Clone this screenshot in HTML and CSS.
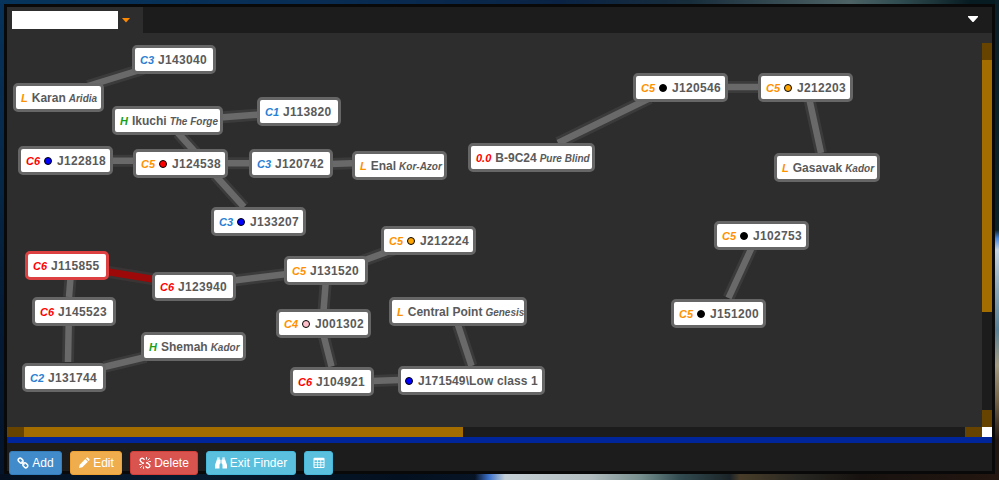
FILE: index.html
```
<!DOCTYPE html>
<html lang="en">
<head>
<meta charset="utf-8">
<title>Map</title>
<link rel="stylesheet" href="styles.css">
</head>
<body>
<main class="window">
  <header class="header">
    <div class="tab"><span class="tab-name"></span><svg class="caret" width="8" height="5" viewBox="0 0 8 5"><path d="M0 0h8L4 4.6z" fill="#ff8a00"/></svg></div>
    <svg class="menu" width="10" height="6" viewBox="0 0 10 6"><path d="M0 0h10v1L5.5 6h-1L0 1z" fill="#fff"/></svg>
  </header>
  <div class="view">
    <div class="canvas">
      <svg class="edges" width="975" height="394" viewBox="7 33 975 394">
        <defs>
          <path id="e" d="M88 86L143 69M220 117.5L260 114.5M178 133L196 153M110 160.7H136M226 163.300H252M330 164L352 163.300M215 175L244 207M234 280.500L287 274M357 263L395 249M325.600 284L323.500 311M324 337L331.500 366.500M371 381L400 380M458 325L471.500 366M70.500 278L69 297M68.700 324L68 362M104 367L146 357M558 143L650 98M725 87H760M809.500 100L821 153M751.500 248L728.500 298"/>
        </defs>
        <use href="#e" stroke="#3b3b3b" stroke-width="12"/>
        <path d="M106 271.500L155 279.500" stroke="#3b3434" stroke-width="12"/>
        <use href="#e" stroke="#696969" stroke-width="6.500"/>
        <path d="M106 271.500L155 279.500" stroke="#9d0808" stroke-width="7"/>
      </svg>
      <div id="nodes"></div>
    </div>
    <div class="vbar"><i class="step"></i><i class="thumb"></i><i class="track"></i><i class="step"></i></div>
  </div>
  <div class="hbar"><i class="step"></i><i class="thumb"></i><i class="track"></i><i class="step"></i><i class="corner"></i></div>
  <div class="divider"></div>
  <footer class="footer">
    <button class="btn add"><svg width="12" height="12" viewBox="0 0 12 12" fill="none" stroke="#fff" stroke-width="1.500"><rect x="-2.600" y="-1.900" width="5.200" height="3.800" rx="1.700" transform="translate(3.600 3.600) rotate(45)"/><rect x="-2.600" y="-1.900" width="5.200" height="3.800" rx="1.700" transform="translate(8.300 8.300) rotate(45)"/><path d="M4.500 4.500l3 3"/></svg>Add</button>
    <button class="btn edit"><svg width="12" height="12" viewBox="0 0 12 12" fill="#fff"><path d="M1 11l.7-3.300L7.300 2.100l2.600 2.600-5.600 5.600zM8 1.400l.8-.8q.5-.4 1 0l1.600 1.600q.4.500 0 1l-.8.800z"/></svg>Edit</button>
    <button class="btn delete"><svg width="12" height="12" viewBox="0 0 12 12" fill="none" stroke="#fff" stroke-width="1.300"><path d="M5.500 2.800L4.300 1.600Q3 .7 1.800 1.800T1.600 4.300L3.600 6.200 5 6M6.500 9.200l1.200 1.200q1.300.9 2.500-.2t.2-2.500L8.400 5.800 7 6"/><path stroke-width=".9" d="M7.500 0v2.500M8.700 3.300L10.800 1.200M9.500 4.500H12M0 7.500h2.500M1.200 10.800l2.100-2.100M4.500 9.500V12"/></svg>Delete</button>
    <button class="btn info finder"><svg width="12" height="12" viewBox="0 0 12 12" fill="#fff"><path d="M2.200.4h2.500v1.300H2.200zM7.300.4h2.500v1.300H7.300zM2 2.200h3v4.500l-.5 1V11.500H0V8zM10 2.200H7v4.500l.5 1v3.800H12V8zM5.400 2.700h1.200v3.800H5.400z"/></svg>Exit Finder</button>
    <button class="btn info grid"><svg width="12" height="12" viewBox="0 0 12 12"><rect x=".5" y=".8" width="11" height="10.200" rx="1" fill="#fff"/><path fill="#5bc0de" d="M1.500 3.200h2.500v1.700H1.500zM4.800 3.200h2.600v1.700H4.800zM8.200 3.200h2.400v1.700H8.200zM1.500 5.700h2.500v1.700H1.500zM4.800 5.700h2.600v1.700H4.800zM8.200 5.700h2.400v1.700H8.200zM1.500 8.200h2.500v1.800H1.500zM4.800 8.200h2.600v1.800H4.800zM8.200 8.200h2.400v1.800H8.200z"/></svg></button>
  </footer>
</main>
<script src="map.js"></script>
</body>
</html>
```
FILE: map.js
```
// x, y, width, class code, effect colour, name, region
const systems = [
  [132, 45, 84, "C3", "", "J143040", ""],
  [13, 83, 91, "L", "", "Karan", "Aridia"],
  [112, 106, 110.5, "H", "", "Ikuchi", "The Forge"],
  [257, 97, 84, "C1", "", "J113820", ""],
  [249, 149, 84, "C3", "", "J120742", ""],
  [352, 151, 94.5, "L", "", "Enal", "Kor-Azor"],
  [468, 143, 126.5, "0.0", "", "B-9C24", "Pure Blind"],
  [18, 146, 95, "C6", "blue", "J122818", ""],
  [133, 149, 95, "C5", "red", "J124538", ""],
  [211, 207, 95, "C3", "blue", "J133207", ""],
  [25, 251, 84, "C6", "", "J115855", "", "selected"],
  [152, 272, 84, "C6", "", "J123940", ""],
  [32, 297, 84, "C6", "", "J145523", ""],
  [141, 332, 104.5, "H", "", "Shemah", "Kador"],
  [22, 363, 84, "C2", "", "J131744", ""],
  [381, 226, 95, "C5", "orange", "J212224", ""],
  [284, 256, 84, "C5", "", "J131520", ""],
  [276, 309, 95, "C4", "pink", "J001302", ""],
  [389, 297, 137.5, "L", "", "Central Point", "Genesis"],
  [290, 367, 84, "C6", "", "J104921", ""],
  [398, 366, 146.5, "", "blue", "J171549\\Low class 1", "", "plain"],
  [633, 73, 95, "C5", "black", "J120546", ""],
  [758, 73, 95, "C5", "orange", "J212203", ""],
  [774, 153, 105.5, "L", "", "Gasavak", "Kador"],
  [714, 221, 95, "C5", "black", "J102753", ""],
  [671, 299, 95, "C5", "black", "J151200", ""]
];
const tone = { C1: "easy", C2: "easy", C3: "easy", C4: "mid", C5: "mid", L: "mid", C6: "hard", "0.0": "hard", H: "safe" };
document.getElementById("nodes").innerHTML = systems.map(([x, y, w, code, fx, name, region, state]) =>
  `<div class="node ${state || ""}" style="left:${x - 7}px;top:${y - 33}px;width:${w}px">` +
  (code ? `<span class="code ${tone[code]}">${code}</span>` : "") +
  (fx ? `<i class="dot" style="background:${fx}"></i>` : "") +
  `<span class="name${/^J\d+$/.test(name) ? " digits" : ""}">${name}</span>` +
  (region ? `<span class="region">${region}</span>` : "") + `</div>`).join("");
```
FILE: styles.css
```
* { box-sizing: border-box; }
body {
  margin: 0;
  width: 999px;
  height: 480px;
  overflow: hidden;
  padding: 4px;
  font-family: "Liberation Sans", Arial, sans-serif;
  background:
    linear-gradient(90deg, #04101f 0, #071b30 180px, #03101f 400px, #071426 475px, #3c72cc 489px, #c4d0d5 505px, #b2bdc0 590px, #78908f 640px, #314b50 680px, #1b2428 730px, #493d29 740px, #282722 800px, #17120f 860px, #241610 999px) 0 474px / 999px 6px no-repeat,
    linear-gradient(#0b2028 0, #0b2229 230px, #4784d8 238px, #c3d4e3 250px, #89a6b7 290px, #598096 330px, #a49c84 365px, #756447 400px, #211712 440px) 995px 0 / 4px 480px no-repeat,
    linear-gradient(90deg, #06345b 0, #082d54 300px, #0a2344 560px, #182d3b 690px, #4c6264 850px, #304c51 900px, #071b22 970px) 0 0 / 999px 4px no-repeat,
    linear-gradient(#07325b 0, #062746 190px, #041c37 300px, #04142a 480px);
}
.window {
  display: flex;
  flex-direction: column;
  width: 991px;
  height: 470px;
  border: 3px solid #090909;
  background: #1c1c1c;
}
.header {
  display: flex;
  justify-content: space-between;
  flex: 0 0 26px;
}
.tab {
  display: flex;
  width: 136px;
  padding: 4px 0 0 5px;
  background: #2d2d2d;
}
.tab-name { width: 106px; height: 18px; background: #fff; }
.caret { margin: 7px 0 0 4px; }
.menu { margin: 9px 14px 0 0; }
.view { display: flex; flex: 0 0 394px; background: #2d2d2d; }
.canvas { position: relative; width: 975px; }
.edges { display: block; }
.vbar { display: flex; flex-direction: column; width: 10px; padding-top: 10px; }
.vbar .step { height: 17px; }
.vbar .thumb { height: 252px; }
.hbar { display: flex; flex: 0 0 10px; }
.hbar .step { width: 17px; }
.hbar .thumb { width: 439px; }
.corner { width: 10px; background: #fff; }
.step { background: #664400; }
.thumb { background: #a36d00; }
.track { flex: 1; background: #1c1c1c; }
.divider { flex: 0 0 6px; background: #00259a; }
.node {
  position: absolute;
  display: flex;
  align-items: baseline;
  height: 29px;
  padding: 1px 0 0 5px;
  border: 3px solid #666;
  border-radius: 5px;
  background: #fff;
  color: #5a5a5a;
  font-weight: bold;
  line-height: 22px;
  white-space: nowrap;
}
.node.selected { border-color: #dc4040; }
.node.plain { padding-left: 4px; letter-spacing: .13px; }
.code { margin-right: 4px; font-size: 11px; font-style: italic; }
.easy { color: #2a7fd4; }
.mid { color: #ff9100; }
.hard { color: #f00; }
.safe { color: #1ba01b; }
.dot {
  align-self: center;
  width: 8px;
  height: 8px;
  margin-right: 5px;
  border: 1px solid #000;
  border-radius: 50%;
}
.name { font-size: 12px; }
.digits { letter-spacing: .33px; }
.region { margin-left: 3px; font-size: 10px; font-style: italic; }
.footer { display: flex; gap: 8px; height: 28px; padding: 8px 0 0 2px; }
.btn {
  display: flex;
  flex: none;
  align-items: center;
  justify-content: center;
  gap: 3px;
  width: 53px;
  height: 24px;
  padding: 0;
  border: 1px solid;
  border-radius: 3px;
  color: #fff;
  font: 12px "Liberation Sans", Arial, sans-serif;
}
.add { background: #428bca; border-color: #357ebd; }
.edit { width: 52px; background: #f0ad4e; border-color: #eea236; }
.delete { width: 68px; background: #d9534f; border-color: #d43f3a; }
.info { background: #5bc0de; border-color: #46b8da; }
.finder { width: 90px; }
.grid { width: 29px; }
```
